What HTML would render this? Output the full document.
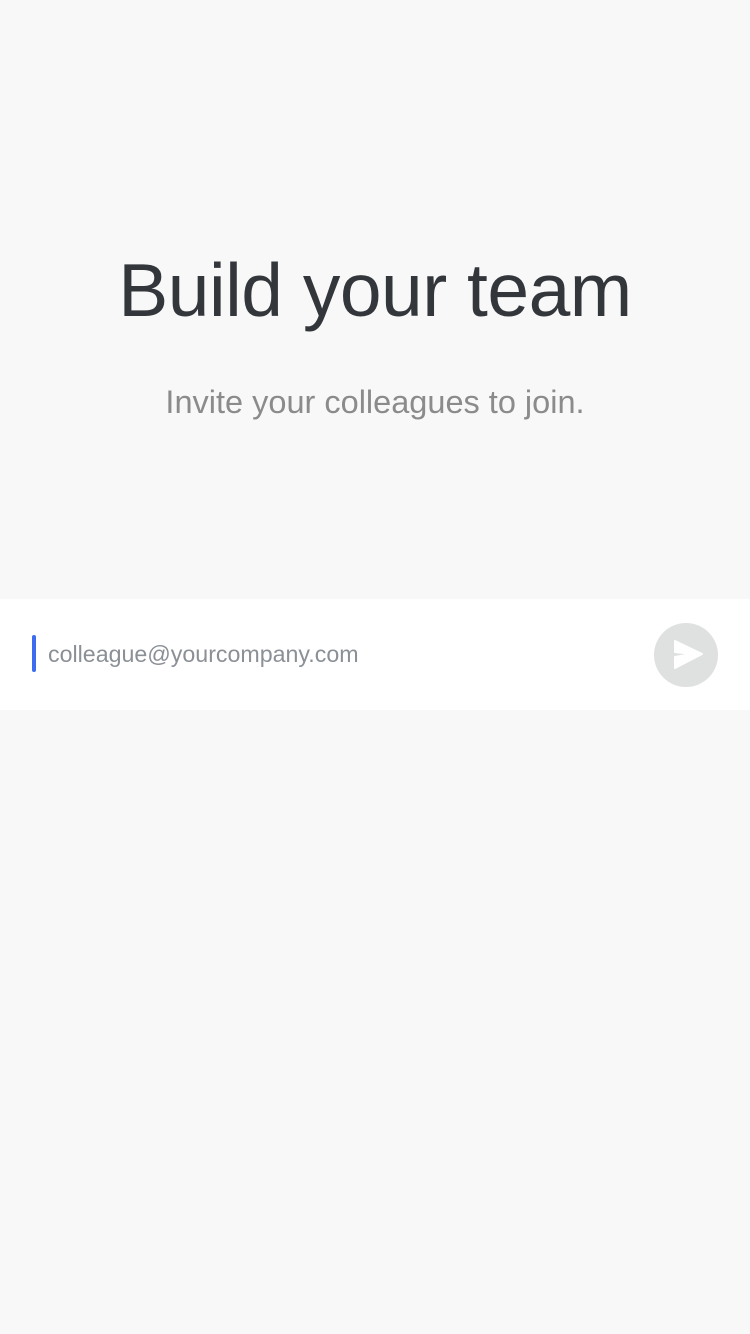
<!DOCTYPE html>
<html><head><style>
body{margin:0;width:750px;height:1334px;background:#f8f8f8;font-family:"Liberation Sans",sans-serif;position:relative;overflow:hidden}
.t{position:absolute;top:240px;left:0;width:750px;text-align:center;font-size:75px;color:#33373c;line-height:100px;letter-spacing:-0.5px}
.s{position:absolute;top:382px;left:0;width:750px;text-align:center;font-size:32.5px;color:#8b8b8b;line-height:40px}
.band{position:absolute;top:599px;left:0;width:750px;height:111px;background:#fff}
.cur{position:absolute;left:32px;top:36px;width:4px;height:37px;background:#3d6cf0;border-radius:2px}
.ph{position:absolute;left:48px;top:40px;font-size:23.2px;color:#8b9096;line-height:30px}
.btn{position:absolute;left:654px;top:24px;width:64px;height:64px;border-radius:50%;background:#dfe0e0}
</style></head><body>
<div class="t">Build your team</div>
<div class="s">Invite your colleagues to join.</div>
<div class="band">
<div class="cur"></div>
<div class="ph">colleague@yourcompany.com</div>
<div class="btn"><svg width="64" height="64" viewBox="0 0 64 64"><path d="M21 18 L48 31 L21 45 L21 34 L38 31 L21 29 Z" fill="#fff" stroke="#fff" stroke-width="2" stroke-linejoin="round"/></svg></div>
</div>
</body></html>
